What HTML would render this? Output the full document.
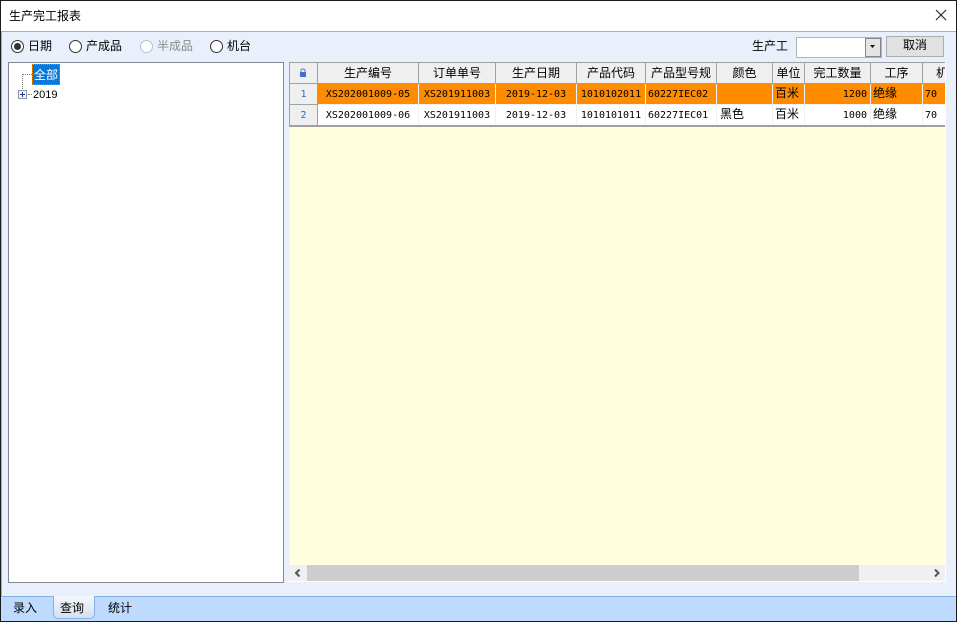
<!DOCTYPE html>
<html><head><meta charset="utf-8"><style>
html,body{margin:0;padding:0;width:957px;height:622px;overflow:hidden;background:#fff}
*{box-sizing:border-box}
body{font:12px "WenQuanYi Zen Hei","Noto Sans CJK SC","Liberation Sans",sans-serif;color:#000}
.a{position:absolute;white-space:nowrap}
.t{position:absolute;white-space:nowrap;line-height:14px;height:14px}
.c{position:absolute;text-align:center;line-height:20px;height:20px;white-space:nowrap;overflow:hidden}
.m{font-family:"DejaVu Sans Mono","Liberation Mono",monospace;font-size:10px;color:#000;margin-top:1px}
.r{position:absolute;width:13px;height:13px;border-radius:50%;border:1px solid #333;background:#fff}
</style></head><body>
<div class="a" style="left:0;top:0;width:957px;height:622px;overflow:hidden;background:#fff">
<!-- client -->
<div class="a" style="left:1px;top:31px;width:955px;height:566px;background:#e9f0fb;border:1px solid #98b1d6;border-bottom:0;border-right:0"></div>
<div class="a" style="left:1px;top:596px;width:955px;height:25px;background:#bedaff;border-top:1px solid #85afe6"></div>
<!-- window border -->
<div class="a" style="left:0;top:0;width:957px;height:622px;border:1px solid #1c1c1c"></div>

<div class="t" style="left:9px;top:9px">生产完工报表</div>
<svg class="a" style="left:935px;top:9px" width="12" height="12"><path d="M1 1L11 11M11 1L1 11" stroke="#222" stroke-width="1.1" fill="none"/></svg>

<!-- radios -->
<div class="r" style="left:11px;top:40px"></div><div class="a" style="left:14px;top:43px;width:7px;height:7px;border-radius:50%;background:#333"></div>
<div class="t" style="left:28px;top:39px">日期</div>
<div class="r" style="left:69px;top:40px"></div>
<div class="t" style="left:86px;top:39px">产成品</div>
<div class="r" style="left:140px;top:40px;border-color:#b9bec6"></div>
<div class="t" style="left:157px;top:39px;color:#8a8a8a">半成品</div>
<div class="r" style="left:210px;top:40px"></div>
<div class="t" style="left:227px;top:39px">机台</div>

<div class="t" style="left:752px;top:39px">生产工</div>
<div class="a" style="left:796px;top:37px;width:86px;height:21px;background:#fff;border:1px solid #b4b4b4"></div>
<div class="a" style="left:865px;top:38px;width:16px;height:19px;background:#e4e4e4;border:1px solid #888"></div>
<svg class="a" style="left:869px;top:45px" width="8" height="5"><path d="M1 0H6L3.500 3Z" fill="#111"/></svg>
<div class="a" style="left:886px;top:36px;width:58px;height:21px;background:#e1e1e1;border:1px solid #adadad;text-align:center;line-height:16px">取消</div>

<!-- tree -->
<div class="a" style="left:8px;top:62px;width:276px;height:521px;background:#fff;border:1px solid #828790"></div>
<div class="a" style="left:22px;top:74px;width:10px;height:1px;border-top:1px dotted #777"></div>
<div class="a" style="left:22px;top:74px;width:1px;height:15px;border-left:1px dotted #777"></div>
<div class="a" style="left:32px;top:64px;width:28px;height:21px;background:#0a78d7;border:1px dotted #f08000;color:#fff;text-align:center;line-height:19px">全部</div>
<div class="a" style="left:18px;top:90px;width:9px;height:9px;border:1px solid #8c96a8;background:#f2f4f8"></div>
<div class="a" style="left:20px;top:94px;width:5px;height:1px;background:#23378c"></div>
<div class="a" style="left:22px;top:92px;width:1px;height:5px;background:#23378c"></div>
<div class="a" style="left:28px;top:94px;width:4px;height:1px;border-top:1px dotted #777"></div>
<div class="t" style="left:33px;top:88px;font-family:'Liberation Sans',sans-serif;font-size:11px">2019</div>

<!-- grid -->
<div class="a" style="left:290px;top:63px;width:655px;height:518px;background:#ffffe0"></div>
<div class="a" style="left:289px;top:62px;width:1px;height:64px;background:#a0a0a0"></div>
<div class="a" style="left:290px;top:63px;width:655px;height:20px;background:#efefef"></div>
<div class="a" style="left:290px;top:84px;width:27px;height:41px;background:#efefef"></div>
<div class="a" style="left:318px;top:84px;width:627px;height:20px;background:#ff8c00"></div>
<div class="a" style="left:318px;top:105px;width:627px;height:20px;background:#fff"></div>
<div class="a" style="left:289px;top:62px;width:656px;height:1px;background:#a0a0a0"></div>
<div class="a" style="left:289px;top:83px;width:656px;height:1px;background:#a0a0a0"></div>
<div class="a" style="left:289px;top:104px;width:29px;height:1px;background:#a0a0a0"></div>
<div class="a" style="left:318px;top:104px;width:627px;height:1px;background:#f0f0f0"></div>
<div class="a" style="left:289px;top:125px;width:656px;height:2px;background:#a0a0a0"></div>

<div class="a" style="left:317px;top:62px;width:1px;height:64px;background:#a0a0a0"></div>
<!-- header separators -->
<div class="a" style="left:418px;top:62px;width:1px;height:21px;background:#a0a0a0"></div>
<div class="a" style="left:495px;top:62px;width:1px;height:21px;background:#a0a0a0"></div>
<div class="a" style="left:576px;top:62px;width:1px;height:21px;background:#a0a0a0"></div>
<div class="a" style="left:645px;top:62px;width:1px;height:21px;background:#a0a0a0"></div>
<div class="a" style="left:716px;top:62px;width:1px;height:21px;background:#a0a0a0"></div>
<div class="a" style="left:772px;top:62px;width:1px;height:21px;background:#a0a0a0"></div>
<div class="a" style="left:804px;top:62px;width:1px;height:21px;background:#a0a0a0"></div>
<div class="a" style="left:870px;top:62px;width:1px;height:21px;background:#a0a0a0"></div>
<div class="a" style="left:922px;top:62px;width:1px;height:21px;background:#a0a0a0"></div>
<!-- row separators -->
<div class="a" style="left:418px;top:84px;width:1px;height:41px;background:#f0f0f0"></div>
<div class="a" style="left:495px;top:84px;width:1px;height:41px;background:#f0f0f0"></div>
<div class="a" style="left:576px;top:84px;width:1px;height:41px;background:#f0f0f0"></div>
<div class="a" style="left:645px;top:84px;width:1px;height:41px;background:#f0f0f0"></div>
<div class="a" style="left:716px;top:84px;width:1px;height:41px;background:#f0f0f0"></div>
<div class="a" style="left:772px;top:84px;width:1px;height:41px;background:#f0f0f0"></div>
<div class="a" style="left:804px;top:84px;width:1px;height:41px;background:#f0f0f0"></div>
<div class="a" style="left:870px;top:84px;width:1px;height:41px;background:#f0f0f0"></div>
<div class="a" style="left:922px;top:84px;width:1px;height:41px;background:#f0f0f0"></div>

<!-- lock -->
<svg class="a" style="left:299px;top:68px" width="8" height="10"><path d="M2 4V2.500Q2 1 4 1Q6 1 6 2.500V4" fill="none" stroke="#5a7fc0"/><rect x="1" y="4" width="6" height="5" fill="#3f6fd0"/></svg>

<!-- header text -->
<div class="c" style="left:318px;top:63px;width:100px">生产编号</div>
<div class="c" style="left:419px;top:63px;width:76px">订单单号</div>
<div class="c" style="left:496px;top:63px;width:80px">生产日期</div>
<div class="c" style="left:577px;top:63px;width:68px">产品代码</div>
<div class="c" style="left:646px;top:63px;width:70px">产品型号规</div>
<div class="c" style="left:717px;top:63px;width:55px">颜色</div>
<div class="c" style="left:773px;top:63px;width:31px">单位</div>
<div class="c" style="left:805px;top:63px;width:65px">完工数量</div>
<div class="c" style="left:871px;top:63px;width:51px">工序</div>
<div class="a" style="left:936px;top:63px;line-height:20px;width:9px;overflow:hidden">机台</div>

<!-- row numbers -->
<div class="c m" style="left:290px;top:84px;width:27px;color:#2a6fb5">1</div>
<div class="c m" style="left:290px;top:105px;width:27px;color:#2a6fb5">2</div>

<!-- row 1 -->
<div class="c m" style="left:318px;top:84px;width:100px">XS202001009-05</div>
<div class="c m" style="left:419px;top:84px;width:76px">XS201911003</div>
<div class="c m" style="left:496px;top:84px;width:80px">2019-12-03</div>
<div class="c m" style="left:577px;top:84px;width:68px">1010102011</div>
<div class="c m" style="left:648px;top:84px;text-align:left">60227IEC02</div>
<div class="c" style="left:775px;top:83px">百米</div>
<div class="c m" style="left:805px;top:84px;width:62px;text-align:right">1200</div>
<div class="c" style="left:873px;top:83px">绝缘</div>
<div class="c m" style="left:925px;top:84px">70</div>
<!-- row 2 -->
<div class="c m" style="left:318px;top:105px;width:100px">XS202001009-06</div>
<div class="c m" style="left:419px;top:105px;width:76px">XS201911003</div>
<div class="c m" style="left:496px;top:105px;width:80px">2019-12-03</div>
<div class="c m" style="left:577px;top:105px;width:68px">1010101011</div>
<div class="c m" style="left:648px;top:105px;text-align:left">60227IEC01</div>
<div class="c" style="left:720px;top:104px">黑色</div>
<div class="c" style="left:775px;top:104px">百米</div>
<div class="c m" style="left:805px;top:105px;width:62px;text-align:right">1000</div>
<div class="c" style="left:873px;top:104px">绝缘</div>
<div class="c m" style="left:925px;top:105px">70</div>

<!-- scrollbar -->
<div class="a" style="left:290px;top:565px;width:655px;height:16px;background:#f0f0f0"></div>
<div class="a" style="left:307px;top:565px;width:552px;height:16px;background:#cdcdcd"></div>
<svg class="a" style="left:294px;top:569px" width="8" height="8"><path d="M5.500 0.500L2 4L5.500 7.500" fill="none" stroke="#555" stroke-width="2"/></svg>
<svg class="a" style="left:933px;top:569px" width="8" height="8"><path d="M2 0.500L5.500 4L2 7.500" fill="none" stroke="#555" stroke-width="2"/></svg>
<div class="a" style="left:945px;top:62px;width:1px;height:520px;background:#fff"></div>
<div class="a" style="left:289px;top:581px;width:657px;height:1px;background:#fff"></div>

<!-- tabs -->
<div class="t" style="left:13px;top:601px">录入</div>
<div class="a" style="left:53px;top:596px;width:42px;height:23px;background:linear-gradient(#f4f7fc,#d5e0f0);border:1px solid #85afe6;border-top:0;border-radius:0 0 5px 5px;line-height:23px;padding-left:6px">查询</div>
<div class="t" style="left:108px;top:601px">统计</div>
</div>
</body></html>
